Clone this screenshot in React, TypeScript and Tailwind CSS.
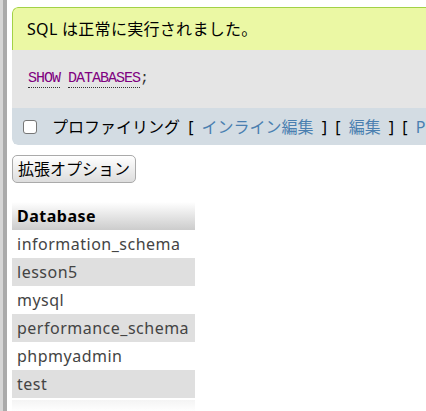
const databases = [
  'information_schema',
  'lesson5',
  'mysql',
  'performance_schema',
  'phpmyadmin',
  'test',
];

const sans = "font-['Noto_Sans','Noto_Sans_CJK_JP',sans-serif]";

const App = () => {
  return (
    <div className={`flex w-[426px] h-[411px] overflow-hidden bg-white ${sans}`}>
      {/* left frame edge */}
      <div className="w-[3px] shrink-0 bg-[#d6d6d6]" />
      <div className="w-[4px] shrink-0 bg-[#aaaaaa]" />

      <div className="flex-1 pl-[5px] pt-[7px] min-w-0">
        {/* result message block */}
        <div className="w-[640px] rounded-l-[6px] overflow-hidden">
          <div className="h-[43px] flex items-center pl-[14px] bg-[#ebf8a4] border-t border-l border-[#a2d246] rounded-tl-[6px] text-[16px] tracking-[0.3px] text-black">
            SQL は正常に実行されました。
          </div>
          <div className="h-[58px] flex items-center pl-[16px] bg-[#e5e5e5]">
            <span className="font-['Liberation_Mono',monospace] text-[15px] tracking-[-1px] text-[#800080]">
              <span className="border-b border-dotted border-[#333]">SHOW</span>{' '}
              <span className="border-b border-dotted border-[#333]">DATABASES</span>
              <span className="text-[#333]">;</span>
            </span>
          </div>
          <div className="h-[37px] flex items-center pl-[11px] bg-[#d3dce3] rounded-bl-[6px] text-[16px] text-black">
            <span className="w-[14px] h-[14px] rounded-[3px] border border-[#767676] bg-white shrink-0" />
            <span className="ml-[15px] whitespace-nowrap [word-spacing:4px]">
              プロファイリング [ <span className="text-[#4a7fb0]">インライン編集</span> ] [{' '}
              <span className="text-[#4a7fb0]">編集</span> ] [ <span className="text-[#4a7fb0]">PHP コードの作成</span> ]
            </span>
          </div>
        </div>

        {/* options button */}
        <button className="mt-[10px] h-[28px] px-[5px] rounded-[5px] border border-[#aaaaaa] bg-gradient-to-b from-white to-[#dddddd] text-[16px] text-black leading-none">
          拡張オプション
        </button>

        {/* results table */}
        <table className="mt-[19px] w-[183px] border-collapse text-[16px] tracking-[0.5px]">
          <thead>
            <tr>
              <th className="h-[28px] px-[5px] text-left font-bold text-black bg-gradient-to-b from-white to-[#cccccc]">
                Database
              </th>
            </tr>
          </thead>
          <tbody>
            {databases.map((db, i) => (
              <tr key={db} className={i % 2 === 1 ? 'bg-[#dfdfdf]' : 'bg-white'}>
                <td className="h-[28px] px-[5px] text-[#444444] whitespace-nowrap">{db}</td>
              </tr>
            ))}
          </tbody>
        </table>

        <div className="mt-[2px] w-[183px] h-[12px] bg-gradient-to-b from-[#f4f4f4] to-white" />
      </div>
    </div>
  );
};

export default App;
